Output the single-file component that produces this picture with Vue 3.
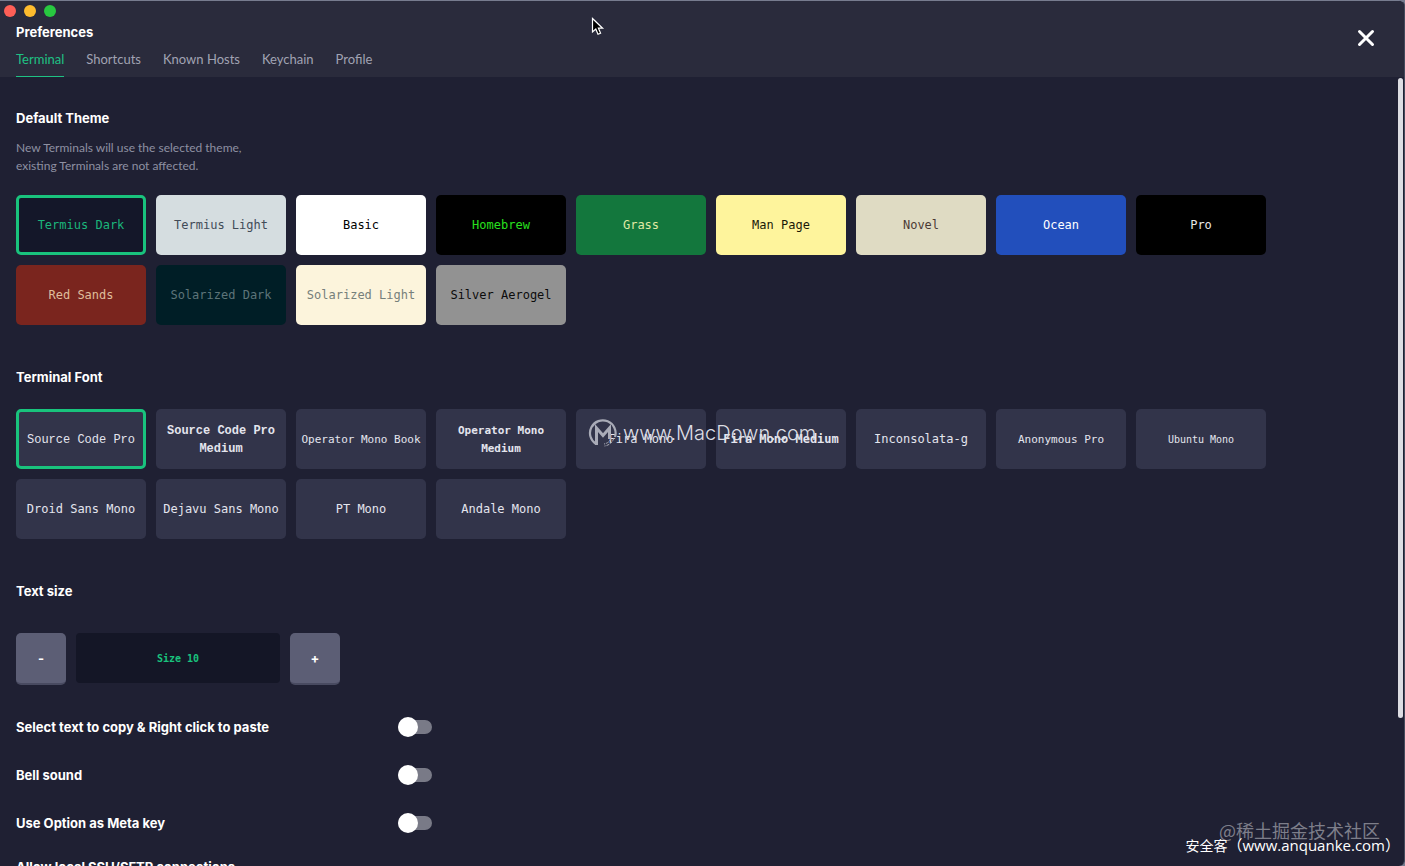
<script setup>
import { ref } from "vue";

const tabs = ["Terminal", "Shortcuts", "Known Hosts", "Keychain", "Profile"];
const activeTab = ref("Terminal");

const themes = [
  { name: "Termius Dark", id: "termius-dark" },
  { name: "Termius Light", id: "termius-light" },
  { name: "Basic", id: "basic" },
  { name: "Homebrew", id: "homebrew" },
  { name: "Grass", id: "grass" },
  { name: "Man Page", id: "man-page" },
  { name: "Novel", id: "novel" },
  { name: "Ocean", id: "ocean" },
  { name: "Pro", id: "pro" },
  { name: "Red Sands", id: "red-sands" },
  { name: "Solarized Dark", id: "solarized-dark" },
  { name: "Solarized Light", id: "solarized-light" },
  { name: "Silver Aerogel", id: "silver-aerogel" },
];
const activeTheme = ref("Termius Dark");

const fonts = [
  { name: "Source Code Pro", look: "wide" },
  { name: "Source Code Pro Medium", look: "wide bold" },
  { name: "Operator Mono Book", look: "small" },
  { name: "Operator Mono Medium", look: "small bold" },
  { name: "Fira Mono", look: "" },
  { name: "Fira Mono Medium", look: "bold" },
  { name: "Inconsolata-g", look: "" },
  { name: "Anonymous Pro", look: "small" },
  { name: "Ubuntu Mono", look: "tiny" },
  { name: "Droid Sans Mono", look: "" },
  { name: "Dejavu Sans Mono", look: "" },
  { name: "PT Mono", look: "" },
  { name: "Andale Mono", look: "" },
];
const activeFont = ref("Source Code Pro");

const size = ref(10);

const options = ref([
  { id: "copy", label: "Select text to copy & Right click to paste", on: false },
  { id: "bell", label: "Bell sound", on: false },
  { id: "meta", label: "Use Option as Meta key", on: false },
  { id: "local", label: "Allow local SSH/SFTP connections", on: false },
]);
</script>

<template>
  <div class="window">
    <header class="header">
      <div class="lights">
        <button class="light red" aria-label="Close window"></button>
        <button class="light yellow" aria-label="Minimize"></button>
        <button class="light green" aria-label="Zoom"></button>
      </div>
      <h1 class="title">Preferences</h1>
      <nav class="tabs">
        <button
          v-for="tab in tabs"
          :key="tab"
          class="tab"
          :class="{ active: tab === activeTab }"
          @click="activeTab = tab"
        >
          {{ tab }}
        </button>
      </nav>
      <button class="close" aria-label="Close">
        <svg width="18" height="18" viewBox="0 0 18 18">
          <path
            d="M2.5 2.5 15.5 15.5M15.5 2.5 2.5 15.5"
            stroke="#fff"
            stroke-width="3"
            stroke-linecap="round"
          />
        </svg>
      </button>
    </header>

    <main class="content">
      <section>
        <h2>Default Theme</h2>
        <p class="hint">
          New Terminals will use the selected theme, existing Terminals are not
          affected.
        </p>
        <div class="tiles">
          <button
            v-for="theme in themes"
            :key="theme.id"
            class="tile"
            :class="[theme.id, { selected: theme.name === activeTheme }]"
            @click="activeTheme = theme.name"
          >
            {{ theme.name }}
          </button>
        </div>
      </section>

      <section>
        <h2>Terminal Font</h2>
        <div class="tiles">
          <button
            v-for="font in fonts"
            :key="font.name"
            class="tile"
            :class="[font.look, { selected: font.name === activeFont }]"
            @click="activeFont = font.name"
          >
            {{ font.name }}
          </button>
        </div>
      </section>

      <section>
        <h2>Text size</h2>
        <div class="stepper">
          <button class="step" @click="size--">-</button>
          <output class="size">Size {{ size }}</output>
          <button class="step" @click="size++">+</button>
        </div>
      </section>

      <div class="options">
        <div v-for="option in options" :key="option.id" class="option">
          <label :for="option.id">{{ option.label }}</label>
          <input
            :id="option.id"
            v-model="option.on"
            class="switch"
            type="checkbox"
            role="switch"
          />
        </div>
      </div>
    </main>

    <div class="scrollbar"></div>

    <div class="mark center-mark">
      <svg width="30" height="30" viewBox="0 0 30 30" fill="none">
        <path
          d="M8 26A12.8 12.8 0 1 1 27 19"
          stroke="currentColor"
          stroke-width="2.2"
        />
        <path
          d="M8.5 27V10L15 17.5 21.5 10V21"
          stroke="currentColor"
          stroke-width="3"
        />
        <path
          d="M26 20C24.5 24.5 21 27.5 16.5 28M23 20.5C22 23.5 19 25.5 16 26"
          stroke="currentColor"
          stroke-width="1"
          stroke-dasharray="3 1"
        />
      </svg>
      <span>www.MacDown.com</span>
    </div>
    <div class="mark community-mark">@稀土掘金技术社区</div>
    <div class="mark site-mark"><span>安全客</span>（www.anquanke.com）</div>

    <svg class="cursor" width="14" height="20" viewBox="0 0 14 20">
      <path
        d="M1.5 1.5V15L4.8 12 7 17.3 9.6 16.2 7.4 11.2H11.6Z"
        fill="#000"
        stroke="#fff"
        stroke-width="1.2"
      />
    </svg>
  </div>
</template>

<style>
body {
  margin: 0;
  background: #777c8f;
}
</style>

<style scoped>
.window {
  position: relative;
  display: flex;
  flex-direction: column;
  box-sizing: border-box;
  height: 100vh;
  border-top: 1px solid #777c8f;
  border-right: 1px solid #454b5c;
  border-radius: 0 6px 6px 0;
  overflow: hidden;
  background: #1f2033;
  color: #fff;
  font-family: Inter, "Noto Sans CJK SC", sans-serif;
  font-size: 13px;
}

button {
  padding: 0;
  border: 0;
  background: none;
  color: inherit;
  font: inherit;
}

.header {
  position: relative;
  flex: none;
  background: #2a2b3c;
}

.lights {
  display: flex;
  gap: 8px;
  padding: 4px 4px 0;
}

.light {
  width: 12px;
  height: 12px;
  border-radius: 50%;
}

.red {
  background: #fe5f57;
}

.yellow {
  background: #febc2e;
}

.green {
  background: #28c840;
}

.title {
  margin: 4px 16px 0;
  font-size: 13px;
  font-weight: 700;
  line-height: 22px;
}

.tabs {
  display: flex;
  gap: 22px;
  padding: 0 16px;
}

.tab {
  height: 34px;
  padding-bottom: 2px;
  border-bottom: 1px solid transparent;
  color: #a1a3b3;
  font-family: Lato, sans-serif;
}

.tab.active {
  border-color: #1fc184;
  color: #1fc184;
}

.close {
  position: absolute;
  top: 28px;
  right: 29px;
  width: 18px;
  height: 18px;
}

.close svg {
  display: block;
}

.content {
  flex: 1;
  min-height: 0;
  overflow: hidden;
  padding: 30px 16px 0;
}

section {
  margin-bottom: 41px;
}

h2 {
  margin: 0;
  font-size: 13px;
  font-weight: 700;
  line-height: 22px;
}

.hint {
  max-width: 240px;
  margin: 10px 0 -1px;
  color: #8e90a2;
  font-family: Lato, sans-serif;
  font-size: 12px;
  line-height: 18px;
}

.tiles {
  display: flex;
  flex-wrap: wrap;
  gap: 10px;
  margin-top: 21px;
}

.tile {
  box-sizing: border-box;
  width: 130px;
  height: 60px;
  border-radius: 5px;
  background: #32344a;
  color: #e4e5ee;
  font-family: "DejaVu Sans Mono", monospace;
  font-size: 12px;
  line-height: 18px;
}

.tile.wide {
  padding-top: 2px;
  font-family: "Liberation Mono", monospace;
}

.tile.small {
  padding-top: 2px;
  font-size: 11px;
}

.tile.tiny {
  padding-top: 2px;
  font-size: 10px;
}

.tile.bold {
  font-weight: bold;
}

.tile.selected {
  border: 3px solid #19c37d;
}

.termius-dark {
  background: #141729;
  color: #1bb57b;
}

.termius-light {
  background: #d5dde0;
  color: #424b58;
}

.basic {
  background: #fff;
  color: #000;
}

.homebrew {
  background: #000;
  color: #28e01e;
}

.grass {
  background: #13773d;
  color: #e0eaa5;
}

.man-page {
  background: #fef49c;
  color: #1a1808;
}

.novel {
  background: #dfdbc3;
  color: #4b3a35;
}

.ocean {
  background: #224fbc;
  color: #fff;
}

.pro {
  background: #000;
  color: #e6e6e6;
}

.red-sands {
  background: #7a251e;
  color: #dfbd9c;
}

.solarized-dark {
  background: #001e26;
  color: #5d7479;
}

.solarized-light {
  background: #fcf4dc;
  color: #76807b;
}

.silver-aerogel {
  background: #929292;
  color: #0c0c0c;
}

.stepper {
  display: flex;
  gap: 10px;
  margin-top: 31px;
}

.step {
  width: 50px;
  height: 52px;
  border-bottom: 2px solid #484a60;
  border-radius: 5px;
  background: #5c5e75;
  font-weight: 700;
}

.size {
  width: 204px;
  height: 50px;
  border-radius: 4px;
  background: #141626;
  color: #19c37d;
  font: bold 10px/52px "DejaVu Sans Mono", monospace;
  text-align: center;
}

.options {
  margin-top: -23px;
}

.option {
  display: flex;
  align-items: center;
  justify-content: space-between;
  max-width: 416px;
  height: 48px;
  font-weight: 700;
}

/* the last row is taller and runs below the fold */
.option:last-child {
  height: 72px;
}

.option:last-child label {
  align-self: flex-start;
  padding-top: 12px;
}

.switch {
  position: relative;
  appearance: none;
  width: 34px;
  height: 14px;
  margin: 0;
  border-radius: 7px;
  background: #797a87;
}

.switch::before {
  content: "";
  position: absolute;
  top: -3px;
  left: 0;
  width: 20px;
  height: 20px;
  border-radius: 50%;
  background: #fff;
}

.switch:checked::before {
  left: 14px;
}

.scrollbar {
  position: absolute;
  top: 77px;
  right: 1px;
  width: 5px;
  height: 74%;
  border-radius: 3px;
  background: #dddde3;
}

.mark {
  position: absolute;
  white-space: nowrap;
  pointer-events: none;
}

.center-mark {
  top: 417px;
  left: 588px;
  display: flex;
  align-items: center;
  gap: 5px;
  color: #a9abb7;
}

.center-mark span {
  color: #dcdde4;
  font: 300 20px/30px Inter, sans-serif;
}

.community-mark {
  right: 24px;
  bottom: 22px;
  color: #7d7e8a;
  font: 18px/28px "Noto Sans CJK SC", sans-serif;
}

.site-mark {
  right: 4px;
  bottom: 10px;
  font: 15px/20px "Open Sans", "Noto Sans CJK SC", sans-serif;
}

.site-mark span {
  font-size: 14px;
}

.cursor {
  position: absolute;
  top: 16px;
  left: 591px;
}
</style>
